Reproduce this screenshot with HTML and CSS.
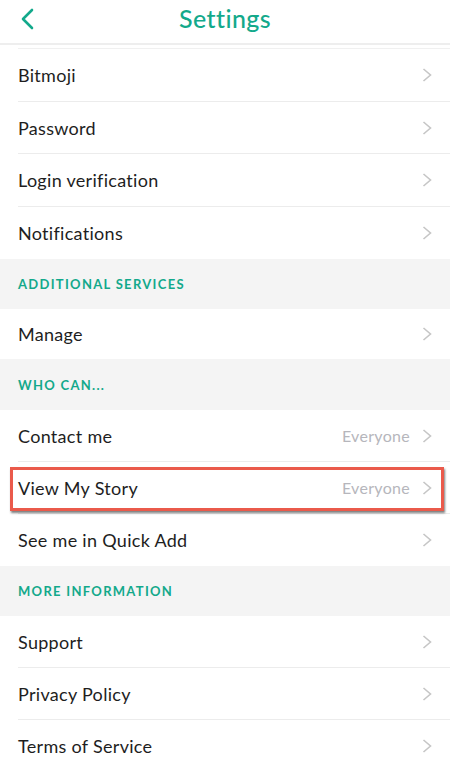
FILE: index.html
```html
<!DOCTYPE html>
<html>
<head>
<meta charset="utf-8">
<link rel="stylesheet" href="styles.css">
</head>
<body>
<div class="screen">
  <header class="topbar">
    <svg class="back" width="14" height="22" viewBox="0 0 14 22"><path d="M12 2 L3 11 L12 20" fill="none" stroke="#13a98b" stroke-width="2.6" stroke-linecap="round" stroke-linejoin="round"/></svg>
    <h1 class="title">Settings</h1>
  </header>
  <div class="list">
    <div class="topline"></div>
    <div class="row h53"><span class="label">Bitmoji</span><svg class="chev" width="10" height="14" viewBox="0 0 10 14"><path d="M1.5 1 L8.5 7 L1.5 13" fill="none" stroke="#c6c6c6" stroke-width="1.6"/></svg></div>
    <div class="row"><span class="label">Password</span><svg class="chev" width="10" height="14" viewBox="0 0 10 14"><path d="M1.5 1 L8.5 7 L1.5 13" fill="none" stroke="#c6c6c6" stroke-width="1.6"/></svg></div>
    <div class="row h53"><span class="label">Login verification</span><svg class="chev" width="10" height="14" viewBox="0 0 10 14"><path d="M1.5 1 L8.5 7 L1.5 13" fill="none" stroke="#c6c6c6" stroke-width="1.6"/></svg></div>
    <div class="row last"><span class="label">Notifications</span><svg class="chev" width="10" height="14" viewBox="0 0 10 14"><path d="M1.5 1 L8.5 7 L1.5 13" fill="none" stroke="#c6c6c6" stroke-width="1.6"/></svg></div>
    <div class="section">ADDITIONAL SERVICES</div>
    <div class="row last short"><span class="label">Manage</span><svg class="chev" width="10" height="14" viewBox="0 0 10 14"><path d="M1.5 1 L8.5 7 L1.5 13" fill="none" stroke="#c6c6c6" stroke-width="1.6"/></svg></div>
    <div class="section tall">WHO CAN...</div>
    <div class="row"><span class="label">Contact me</span><span class="value">Everyone</span><svg class="chev" width="10" height="14" viewBox="0 0 10 14"><path d="M1.5 1 L8.5 7 L1.5 13" fill="none" stroke="#c6c6c6" stroke-width="1.6"/></svg></div>
    <div class="row highlighted"><span class="label">View My Story</span><span class="value">Everyone</span><svg class="chev" width="10" height="14" viewBox="0 0 10 14"><path d="M1.5 1 L8.5 7 L1.5 13" fill="none" stroke="#c6c6c6" stroke-width="1.6"/></svg><div class="highlight-box"></div></div>
    <div class="row last"><span class="label">See me in Quick Add</span><svg class="chev" width="10" height="14" viewBox="0 0 10 14"><path d="M1.5 1 L8.5 7 L1.5 13" fill="none" stroke="#c6c6c6" stroke-width="1.6"/></svg></div>
    <div class="section">MORE INFORMATION</div>
    <div class="row"><span class="label">Support</span><svg class="chev" width="10" height="14" viewBox="0 0 10 14"><path d="M1.5 1 L8.5 7 L1.5 13" fill="none" stroke="#c6c6c6" stroke-width="1.6"/></svg></div>
    <div class="row"><span class="label">Privacy Policy</span><svg class="chev" width="10" height="14" viewBox="0 0 10 14"><path d="M1.5 1 L8.5 7 L1.5 13" fill="none" stroke="#c6c6c6" stroke-width="1.6"/></svg></div>
    <div class="row"><span class="label">Terms of Service</span><svg class="chev" width="10" height="14" viewBox="0 0 10 14"><path d="M1.5 1 L8.5 7 L1.5 13" fill="none" stroke="#c6c6c6" stroke-width="1.6"/></svg></div>
  </div>
</div>
</body>
</html>
```
FILE: styles.css
```css
html, body {
  margin: 0;
  padding: 0;
  background: #ffffff;
}
body {
  font-family: "Lato", "Noto Sans", sans-serif;
  color: #1e1e1e;
  width: 450px;
  height: 768px;
  overflow: hidden;
}
.screen {
  width: 450px;
}
.topbar {
  height: 43px;
  border-bottom: 2px solid #eeeeee;
  display: flex;
  align-items: center;
  justify-content: center;
  position: relative;
}
.back {
  position: absolute;
  left: 20px;
  top: 8px;
}
.title {
  margin: 0 0 8px 0;
  font-size: 25px;
  font-weight: 500;
  color: #13a98b;
  letter-spacing: 0.4px;
}
.list {
  padding-top: 3px;
}
.topline {
  margin-left: 18px;
  border-top: 1px solid #f0f0f0;
}
.row {
  display: flex;
  align-items: center;
  height: 52px;
  box-sizing: border-box;
  margin-left: 18px;
  padding-right: 18px;
  border-bottom: 1px solid #ececec;
  position: relative;
}
.row.h53 {
  height: 53px;
}
.row.last {
  border-bottom: none;
}
.row.short {
  height: 50px;
}
.label {
  flex: 1;
  font-size: 18px;
  letter-spacing: 0.3px;
  color: #1e1e1e;
}
.value {
  font-size: 16px;
  letter-spacing: 0.3px;
  color: #b6b6bc;
  margin-right: 12px;
}
.chev {
  display: block;
}
.section {
  height: 50px;
  background: #f4f4f4;
  display: flex;
  align-items: center;
  padding-left: 18px;
  font-size: 13px;
  font-weight: 700;
  letter-spacing: 1.3px;
  color: #13a98b;
}
.section.tall {
  height: 51px;
}
.highlight-box {
  position: absolute;
  left: -8px;
  right: 6px;
  top: 5px;
  bottom: 2px;
  border: 3px solid #ea5a4b;
  box-shadow: 1px 2px 2px rgba(40, 40, 40, 0.6);
  pointer-events: none;
}
```
